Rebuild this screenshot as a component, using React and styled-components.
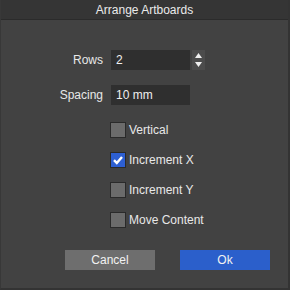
import React from 'react'
import styled, { createGlobalStyle } from 'styled-components'

const GlobalStyle = createGlobalStyle`
    body {
        margin: 0;
        background: #424242;
        font-family: "Liberation Sans", Arial, sans-serif;
    }
`

const options = [
    { label: 'Vertical', checked: false },
    { label: 'Increment X', checked: true },
    { label: 'Increment Y', checked: false },
    { label: 'Move Content', checked: false },
]

function App() {
    return (
        <Dialog>
            <GlobalStyle />
            <TitleBar>Arrange Artboards</TitleBar>
            <Body>
                <Field>
                    <Label>Rows</Label>
                    <Input>2</Input>
                    <Spinner>
                        <svg width="13" height="20" viewBox="0 0 13 20">
                            <path d="M6.5 3 L10 8 L3 8 Z" fill="#f0f0f0" />
                            <path d="M6.5 17 L10 12 L3 12 Z" fill="#f0f0f0" />
                        </svg>
                    </Spinner>
                </Field>
                <Field>
                    <Label>Spacing</Label>
                    <Input>10 mm</Input>
                </Field>
                <Checks>
                    {options.map(item => (
                        <CheckRow key={item.label}>
                            <Box checked={item.checked}>
                                {item.checked && (
                                    <svg width="12" height="12" viewBox="0 0 12 12">
                                        <path d="M2 6.2 L4.8 9 L10 3" fill="none" stroke="#fff" strokeWidth="2.4" />
                                    </svg>
                                )}
                            </Box>
                            {item.label}
                        </CheckRow>
                    ))}
                </Checks>
                <Buttons>
                    <Button>Cancel</Button>
                    <Button primary>Ok</Button>
                </Buttons>
            </Body>
        </Dialog>
    )
}

export default App

const Dialog = styled.div`
    width: 290px;
    height: 290px;
    box-sizing: border-box;
    background: #424242;
    border-right: 2px solid #333;
    border-bottom: 2px solid #333;
    border-left: 1px solid #383838;
    display: flex;
    flex-direction: column;
    color: #e8e8e8;
    font-size: 12px;
`

const TitleBar = styled.div`
    height: 19px;
    background: #353535;
    border-bottom: 1px solid #2b2b2b;
    display: flex;
    align-items: center;
    justify-content: center;
    color: #eaeaea;
`

const Body = styled.div`
    padding-top: 30px;
    display: flex;
    flex-direction: column;
`

const Field = styled.div`
    display: flex;
    align-items: center;
    height: 20px;
    margin-bottom: 15px;
`

const Label = styled.div`
    width: 102px;
    text-align: right;
    margin-right: 8px;
`

const Input = styled.div`
    width: 79px;
    height: 20px;
    box-sizing: border-box;
    background: #2f2f2f;
    padding-left: 5px;
    display: flex;
    align-items: center;
    color: #f0f0f0;
`

const Spinner = styled.div`
    width: 13px;
    height: 20px;
    margin-left: 2px;
    background: #4c4c4c;
    display: flex;
`

const Checks = styled.div`
    margin-top: 2px;
    padding-left: 109px;
    display: flex;
    flex-direction: column;
    gap: 14px;
`

const CheckRow = styled.div`
    display: flex;
    align-items: center;
    height: 16px;
    gap: 3px;
`

const Box = styled.div`
    width: 16px;
    height: 16px;
    box-sizing: border-box;
    border: 1px solid #2a2a2a;
    background: ${p => (p.checked ? '#2d5fd2' : '#6b6b6b')};
    display: flex;
    align-items: center;
    justify-content: center;
`

const Buttons = styled.div`
    margin-top: 22px;
    padding-left: 64px;
    display: flex;
    gap: 25px;
`

const Button = styled.div`
    width: 90px;
    height: 20px;
    display: flex;
    align-items: center;
    justify-content: center;
    background: ${p => (p.primary ? '#2b5fcb' : '#6e6e6e')};
    color: #f2f2f2;
`
